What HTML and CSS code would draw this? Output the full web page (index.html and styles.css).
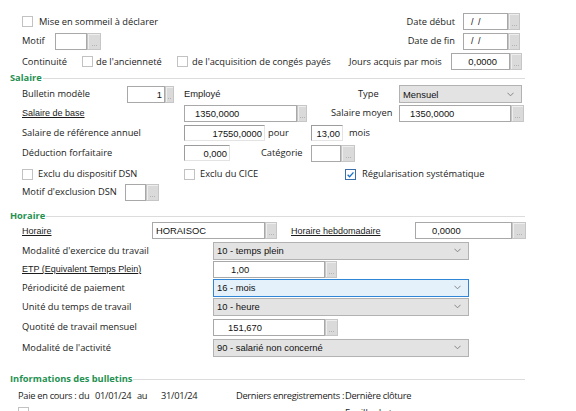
FILE: index.html
```html
<!DOCTYPE html>
<html lang="fr">
<head>
<meta charset="utf-8">
<title>Salarié</title>
<link rel="stylesheet" href="styles.css">
</head>
<body>
<div class="form">

  <div class="row r1">
    <span class="cb"></span><span class="lbl cbtext">Mise en sommeil à déclarer</span>
    <div class="right">
      <span class="lbl">Date début</span>
      <span class="field"><span class="edit w45 date">/ /</span><span class="btn"></span></span>
    </div>
  </div>

  <div class="row r2">
    <span class="lbl w33">Motif</span>
    <span class="field"><span class="edit w32"></span><span class="btn b14"></span></span>
    <div class="right">
      <span class="lbl">Date de fin</span>
      <span class="field"><span class="edit w45 date">/ /</span><span class="btn"></span></span>
    </div>
  </div>

  <div class="row r3">
    <span class="lbl w60">Continuité</span>
    <span class="cb"></span><span class="lbl w81 g3">de l'ancienneté</span>
    <span class="cb"></span><span class="lbl w157 g4">de l'acquisition de congés payés</span>
    <span class="lbl w102">Jours acquis par mois</span>
    <span class="field"><span class="edit w59 num pr12">0,0000</span><span class="btn"></span></span>
  </div>

  <h2 class="legend l-salaire"><span>Salaire</span></h2>

  <div class="row r4">
    <span class="lbl w105">Bulletin modèle</span>
    <span class="field"><span class="edit w38 num">1</span><span class="btn b9"></span></span>
    <span class="val w174 ml10">Employé</span>
    <span class="lbl w41">Type</span>
    <span class="select w123"><span class="sv">Mensuel</span><svg class="chev" viewBox="0 0 8 5"><polyline points="0.5,0.5 4,4 7.5,0.5"/></svg></span>
  </div>

  <div class="row r5">
    <span class="lbl u w162">Salaire de base</span>
    <span class="field"><span class="edit w113 pl10">1350,0000</span><span class="btn b10"></span></span>
    <span class="lbl w68 ml24">Salaire moyen</span>
    <span class="field"><span class="edit w112 pl10">1350,0000</span><span class="btn b13"></span></span>
  </div>

  <div class="row r6">
    <span class="lbl w162">Salaire de référence annuel</span>
    <span class="edit w81 num sunk">17550,0000</span>
    <span class="lbl w43 ml3">pour</span>
    <span class="edit w32 num sunk">13,00</span>
    <span class="lbl ml6">mois</span>
  </div>

  <div class="row r7">
    <span class="lbl w162">Déduction forfaitaire</span>
    <span class="edit w46 num sunk">0,000</span>
    <span class="lbl w50 ml31">Catégorie</span>
    <span class="field"><span class="edit w30"></span><span class="btn b14"></span></span>
  </div>

  <div class="row r8">
    <span class="item w162"><span class="cb"></span><span class="lbl g5">Exclu du dispositif DSN</span></span>
    <span class="item w161"><span class="cb"></span><span class="lbl g5">Exclu du CICE</span></span>
    <span class="item"><span class="cb on"><svg viewBox="0 0 10 10"><polyline points="1.8,5.2 4,7.4 8.3,2.6"/></svg></span><span class="lbl g6">Régularisation systématique</span></span>
  </div>

  <div class="row r9">
    <span class="lbl w103">Motif d'exclusion DSN</span>
    <span class="field"><span class="edit w21"></span><span class="btn b13"></span></span>
  </div>

  <h2 class="legend l-horaire"><span>Horaire</span></h2>

  <div class="row r10">
    <span class="lbl u w130">Horaire</span>
    <span class="field"><span class="edit w113 pl3">HORAISOC</span><span class="btn"></span></span>
    <span class="lbl u w124 ml14">Horaire hebdomadaire</span>
    <span class="field"><span class="edit w97 pl16">0,0000</span><span class="btn b14"></span></span>
  </div>

  <div class="row r11">
    <span class="lbl w191">Modalité d'exercice du travail</span>
    <span class="select w256"><span class="sv">10 - temps plein</span><svg class="chev" viewBox="0 0 8 5"><polyline points="0.5,0.5 4,4 7.5,0.5"/></svg></span>
  </div>

  <div class="row r12">
    <span class="lbl u w191">ETP (Equivalent Temps Plein)</span>
    <span class="field"><span class="edit w112 pl17">1,00</span><span class="btn"></span></span>
  </div>

  <div class="row r13">
    <span class="lbl w191">Périodicité de paiement</span>
    <span class="select w256 focus"><span class="sv">16 - mois</span><svg class="chev" viewBox="0 0 8 5"><polyline points="0.5,0.5 4,4 7.5,0.5"/></svg></span>
  </div>

  <div class="row r14">
    <span class="lbl w191">Unité du temps de travail</span>
    <span class="select w256"><span class="sv">10 - heure</span><svg class="chev" viewBox="0 0 8 5"><polyline points="0.5,0.5 4,4 7.5,0.5"/></svg></span>
  </div>

  <div class="row r15">
    <span class="lbl w191">Quotité de travail mensuel</span>
    <span class="field"><span class="edit w112 pl14">151,670</span><span class="btn b13"></span></span>
  </div>

  <div class="row r16">
    <span class="lbl w191">Modalité de l'activité</span>
    <span class="select w256"><span class="sv">90 - salarié non concerné</span><svg class="chev" viewBox="0 0 8 5"><polyline points="0.5,0.5 4,4 7.5,0.5"/></svg></span>
  </div>

  <h2 class="legend l-info"><span>Informations des bulletins</span></h2>

  <div class="row r17">
    <span class="lbl w77">Paie en cours : du</span>
    <span class="lbl w42">01/01/24</span>
    <span class="lbl w24">au</span>
    <span class="lbl w75">31/01/24</span>
    <span class="lbl w109">Derniers enregistrements :</span>
    <span class="lbl">Dernière clôture</span>
  </div>

  <div class="row r18">
    <span class="item w327"><span class="cb"></span></span>
    <span class="lbl">Feuille de temps</span>
  </div>

</div>
</body>
</html>
```

FILE: styles.css
```css
html, body {
  margin: 0;
  padding: 0;
  background: #ffffff;
}
body {
  width: 576px;
  height: 411px;
  overflow: hidden;
  font-family: "Open Sans", "Noto Sans", sans-serif;
  font-size: 9.3px;
  color: #1b1b1b;
}
.form {
  padding-top: 12px;
}
.row {
  display: flex;
  align-items: center;
  padding-left: 22px;
  white-space: nowrap;
}
.right {
  margin-left: auto;
  margin-right: 56px;
  display: flex;
  align-items: center;
}
.right .lbl { margin-right: 8px; }

.lbl, .val { display: inline-block; flex: none; line-height: 12px; }
.val {
  font-family: "Liberation Sans", Arial, sans-serif;
  font-size: 9.4px;
}
.u {
  font-family: "Liberation Sans", Arial, sans-serif;
  font-size: 9px;
  text-decoration: underline;
}

/* rows: heights & spacing */
.r1 { height: 19px; }
.r2 { height: 18px; margin-top: 1px; }
.r3 { height: 19px; margin-top: 2px; }
.r4 { height: 18px; margin-top: 1px; }
.r5 { height: 18px; margin-top: 1px; }
.r6 { height: 18px; margin-top: 2px; }
.r7 { height: 18px; margin-top: 2px; }
.r8 { height: 18px; margin-top: 3px; }
.r9 { height: 18px; }
.r10 { height: 17px; }
.r11 { height: 19px; margin-top: 2px; }
.r12 { height: 18px; }
.r13 { height: 19px; }
.r14 { height: 19px; }
.r15 { height: 18px; margin-top: 2px; }
.r16 { height: 19px; margin-top: 2px; }
.r17 { height: 17px; margin-top: 2px; padding-left: 18px; letter-spacing: -0.3px; }
.r18 { height: 14px; padding-left: 18px; align-items: flex-start; padding-top: 3px; }

/* legends */
.legend {
  display: flex;
  align-items: center;
  margin: 0;
  padding-left: 10px;
  margin-right: 51px;
  height: 13px;
  font-size: 9.3px;
  font-weight: bold;
  color: #1f9152;
  line-height: 13px;
}
.legend::after {
  content: "";
  flex: 1;
  height: 1px;
  background: #dcdcdc;
  margin-left: 1px;
  margin-top: 2px;
}
.l-salaire { margin-top: 0; }
.l-horaire { margin-top: 7px; height: 14px; }
.l-info { margin-top: 14px; height: 14px; }

/* widths */
.w21 { width: 21px; } .w24 { width: 24px; } .w30 { width: 30px; } .w32 { width: 32px; }
.w33 { width: 33px; } .w38 { width: 38px; } .w41 { width: 41px; } .w42 { width: 42px; }
.w43 { width: 43px; } .w45 { width: 45px; } .w46 { width: 46px; } .w50 { width: 50px; }
.w59 { width: 59px; } .w60 { width: 60px; } .w68 { width: 68px; } .w75 { width: 75px; }
.w77 { width: 77px; } .w81 { width: 81px; } .w97 { width: 97px; } .w102 { width: 102px; }
.w103 { width: 103px; } .w105 { width: 105px; } .w109 { width: 109px; } .w112 { width: 112px; }
.w113 { width: 113px; } .w123 { width: 123px; } .w124 { width: 124px; } .w130 { width: 130px; }
.w157 { width: 157px; } .w161 { width: 161px; } .w162 { width: 162px; } .w174 { width: 174px; }
.w191 { width: 191px; } .w256 { width: 256px; } .w327 { width: 327px; }

.ml3 { margin-left: 3px; } .ml6 { margin-left: 6px; } .ml10 { margin-left: 10px; }
.ml14 { margin-left: 14px; } .ml24 { margin-left: 24px; } .ml31 { margin-left: 31px; }
.g3 { margin-left: 3px; } .g4 { margin-left: 4px; } .g5 { margin-left: 5px; } .g6 { margin-left: 6px; }

/* checkbox */
.item { display: inline-flex; align-items: center; flex: none; }
.cb {
  display: inline-block;
  flex: none;
  width: 9px;
  height: 9px;
  border: 1px solid #c2c2c2;
  background: #fff;
  box-sizing: content-box;
}
.cbtext { margin-left: 6px; }
.cb.on {
  border-color: #3a6ea8;
}
.cb.on svg {
  display: block;
  width: 9px;
  height: 9px;
  fill: none;
  stroke: #1a73c9;
  stroke-width: 1.5;
}

/* edit fields */
.field { display: inline-flex; align-items: stretch; flex: none; }
.edit {
  display: inline-flex;
  align-items: center;
  flex: none;
  box-sizing: border-box;
  height: 16px;
  border: 1px solid #a8a8a8;
  background: #fff;
  font-family: "Liberation Sans", Arial, sans-serif;
  font-size: 9.4px;
  color: #111;
  padding: 0 2px;
  overflow: hidden;
}
.field .edit { height: 17px; }
.edit.num { justify-content: flex-end; }
.edit.sunk { border-color: #9c9c9c #e3e3e3 #e3e3e3 #9c9c9c; }
.edit.date { padding-left: 7px; font-size: 9px; letter-spacing: 1px; }
.pr12 { padding-right: 12px; }
.pl3 { padding-left: 3px; } .pl10 { padding-left: 10px; } .pl14 { padding-left: 14px; }
.pl16 { padding-left: 16px; } .pl17 { padding-left: 17px; }

.btn {
  flex: none;
  position: relative;
  box-sizing: border-box;
  width: 12px;
  border: 1px solid #c6c6c6;
  background: #dadada;
  box-shadow: inset 1px 1px 0 #eeeeee;
}
.btn::after {
  content: "";
  position: absolute;
  left: 3px;
  bottom: 3px;
  width: 5px;
  height: 1px;
  background: repeating-linear-gradient(90deg, #b4b4b4 0 1px, transparent 1px 2px);
}
.b9 { width: 9px; } .b9::after { left: 2px; width: 4px; }
.b10 { width: 10px; } .b10::after { left: 2px; }
.b13 { width: 13px; } .b14 { width: 14px; } .b14::after { left: 4px; }

/* select */
.select {
  display: inline-flex;
  align-items: center;
  flex: none;
  box-sizing: border-box;
  height: 18px;
  border: 1px solid #b2b2b2;
  background: #e3e3e3;
  padding-left: 3px;
  font-family: "Liberation Sans", Arial, sans-serif;
  font-size: 9.4px;
  color: #111;
}
.select.focus {
  background: #e4f0fa;
  border-color: #2e86d6;
}
.sv { flex: 1; }
.chev {
  width: 7px;
  height: 5px;
  margin-right: 7px;
  fill: none;
  stroke: #7a7a7a;
  stroke-width: 1;
}
```
